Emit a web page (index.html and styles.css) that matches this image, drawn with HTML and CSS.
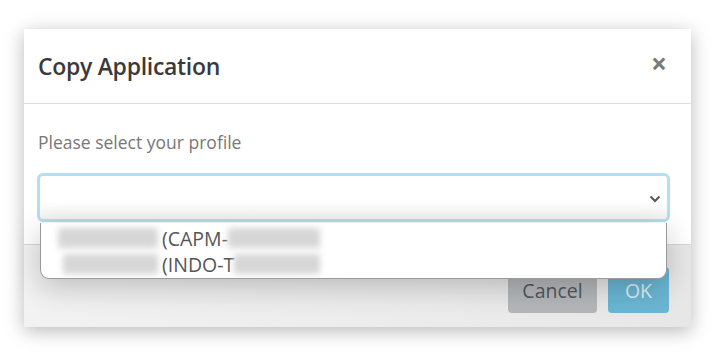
FILE: index.html
```html
<!DOCTYPE html>
<html lang="en">
<head>
    <meta charset="UTF-8">
    <title>Copy Application</title>
    <link rel="stylesheet" href="styles.css">
</head>
<body>
    <div class="modal">
        <div class="modal-header">
            <h2 class="modal-title">Copy Application</h2>
            <span class="close">&times;</span>
        </div>
        <div class="modal-body">
            <label class="field-label">Please select your profile</label>
            <div class="select-wrap">
                <div class="select">
                    <svg class="chevron" width="12" height="8" viewBox="0 0 12 8">
                        <path d="M1.5 1.5 L6 6 L10.5 1.5" fill="none" stroke="#555" stroke-width="2"/>
                    </svg>
                </div>
                <ul class="dropdown">
                    <li class="option"><span class="blur name-a"></span>(CAPM-<span class="blur id-a"></span></li>
                    <li class="option"><span class="blur name-b"></span>(INDO-T<span class="blur id-b"></span></li>
                </ul>
            </div>
        </div>
        <div class="modal-footer">
            <button class="btn btn-cancel">Cancel</button>
            <button class="btn btn-ok">OK</button>
        </div>
    </div>
</body>
</html>
```

FILE: styles.css
```css
body {
    margin: 0;
    padding: 29px 26px 30px 24px;
    background: #ffffff;
    font-family: "Open Sans", "Noto Sans", sans-serif;
}
.modal {
    width: 667px;
    height: 298px;
    background: #ffffff;
    box-shadow: 0 4px 18px rgba(0, 0, 0, 0.28);
    display: flex;
    flex-direction: column;
}
.modal-header {
    height: 74px;
    border-bottom: 1px solid #d9dde6;
    display: flex;
    align-items: center;
    justify-content: space-between;
    padding: 0 24px 0 14px;
}
.modal-title {
    margin: 0;
    font-size: 23px;
    font-weight: 600;
    color: #3a3a3a;
    letter-spacing: -0.3px;
}
.close {
    font-size: 28px;
    font-weight: 700;
    color: #7a7a7a;
    line-height: 1;
    margin-top: -6px;
}
.modal-body {
    padding: 26px 21px 22px 13px;
    border-bottom: 1px solid #d6d6d6;
}
.field-label {
    display: block;
    font-size: 17.5px;
    color: #777777;
    margin: 0 0 19px 1px;
    line-height: 24px;
}
.select-wrap {
    position: relative;
}
.select {
    height: 43px;
    border: 3px solid #b3dff0;
    border-radius: 6px;
    background: linear-gradient(#ffffff 60%, #f3f3f3);
    display: flex;
    align-items: center;
    justify-content: flex-end;
    padding-right: 6px;
}
.chevron {
    margin-top: 3px;
}
.dropdown {
    position: absolute;
    left: 3px;
    right: 3px;
    top: 50px;
    margin: 0;
    padding: 2px 0 0;
    list-style: none;
    background: #ffffff;
    border: 1px solid #9a9a9a;
    border-top: none;
    border-radius: 0 0 9px 9px;
    height: 53px;
    box-shadow: 0 8px 30px rgba(0, 0, 0, 0.22);
    z-index: 2;
}
.option {
    display: flex;
    align-items: center;
    height: 26px;
    font-size: 19.5px;
    color: #555555;
}
.blur {
    display: inline-block;
    height: 20px;
    background: #d6d6d6;
    filter: blur(3px);
}
.name-a {
    width: 100px;
    margin: 0 4px 0 17px;
}
.id-a {
    width: 92px;
}
.name-b {
    width: 95px;
    margin: 0 4px 0 22px;
}
.id-b {
    width: 86px;
}
.modal-footer {
    flex: 1;
    display: flex;
    justify-content: flex-end;
    align-items: flex-start;
    gap: 11px;
    padding: 22px 22px 0 0;
    background: linear-gradient(90deg, #f2f2f2, #e7e7e7);
}
.btn {
    height: 46px;
    border: none;
    border-radius: 4px;
    font-family: "Open Sans", "Noto Sans", sans-serif;
    font-size: 19.5px;
    padding: 0;
}
.btn-cancel {
    width: 89px;
    background: #b4b7ba;
    color: #53575b;
}
.btn-ok {
    width: 61px;
    background: #6ab6d3;
    color: #dcf0f7;
}
```
